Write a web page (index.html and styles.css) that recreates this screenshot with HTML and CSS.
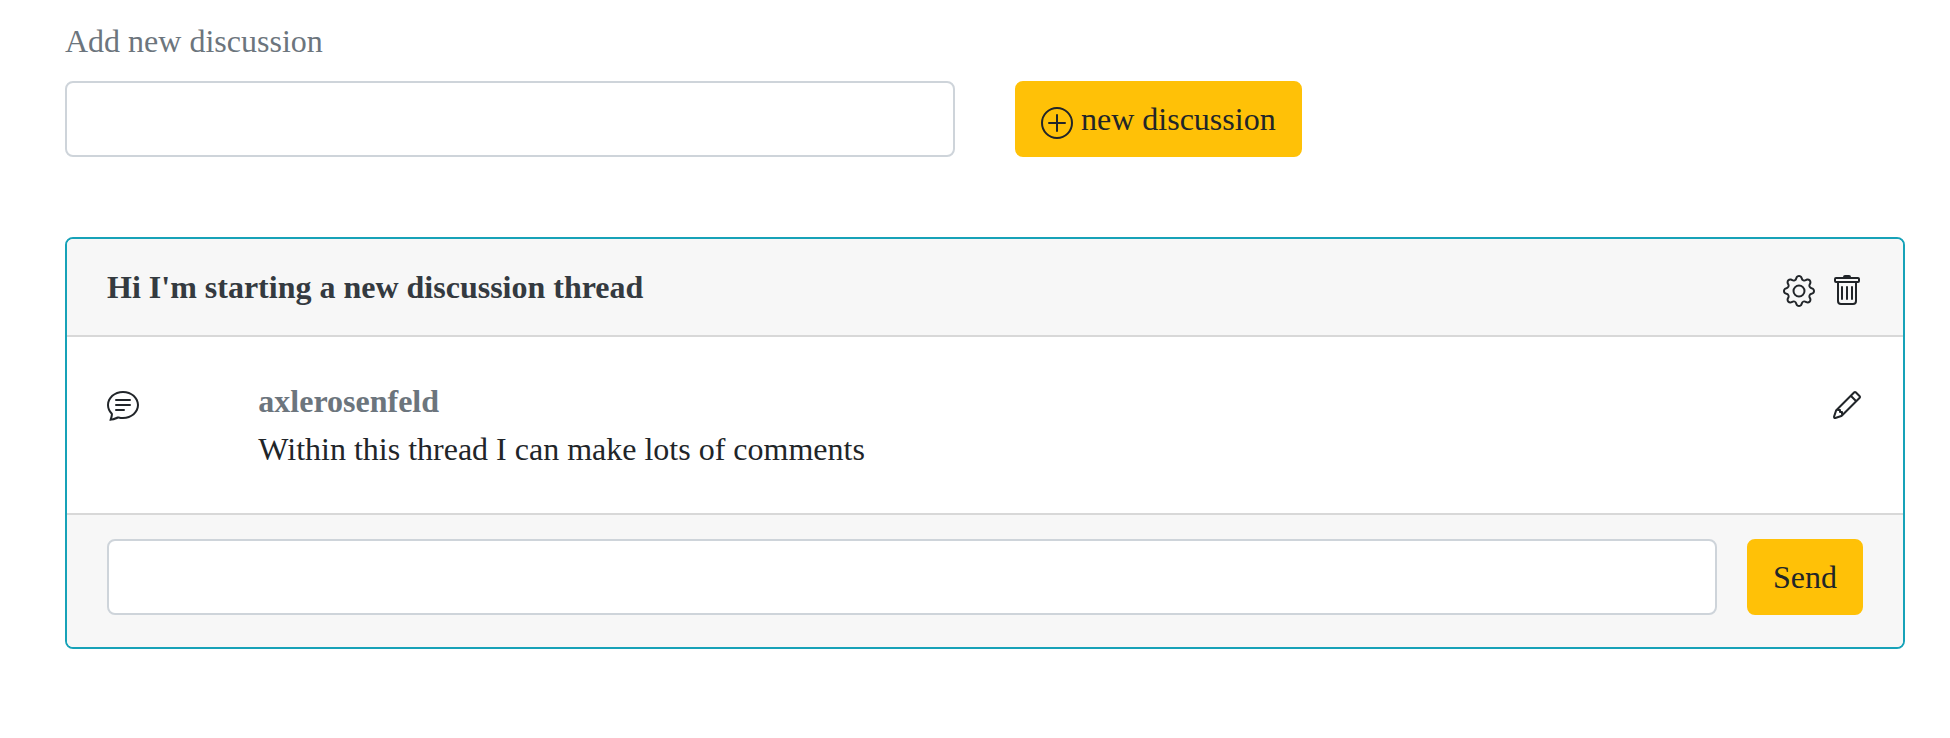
FILE: index.html
```html
<!DOCTYPE html>
<html lang="en">
<head>
<meta charset="utf-8">
<title>Discussions</title>
<link rel="stylesheet" href="styles.css">
</head>
<body>
<main class="page">
  <form class="new-discussion">
    <label class="label" for="topic">Add new discussion</label>
    <div class="new-row">
      <input class="input topic" id="topic" type="text">
      <button class="btn btn-new" type="button"><svg class="icon" viewBox="0 0 16 16" fill="currentColor"><path fill-rule="evenodd" d="M8 15A7 7 0 1 0 8 1a7 7 0 0 0 0 14zm0 1A8 8 0 1 0 8 0a8 8 0 0 0 0 16z"/><path fill-rule="evenodd" d="M8 3.5a.5.5 0 0 1 .5.5v3.500H12a.5.5 0 0 1 0 1H8.500V12a.5.5 0 0 1-1 0V8.500H4a.5.5 0 0 1 0-1h3.500V4a.5.5 0 0 1 .5-.5z"/></svg> new discussion</button>
    </div>
  </form>
  <section class="card">
    <header class="card-header">
      <strong class="title">Hi I'm starting a new discussion thread</strong>
      <div class="actions">
        <svg class="icon" viewBox="0 0 16 16" fill="currentColor"><path fill-rule="evenodd" d="M8.837 1.626c-.246-.835-1.428-.835-1.674 0l-.094.319A1.873 1.873 0 0 1 4.377 3.060l-.292-.16c-.764-.415-1.600.420-1.184 1.185l.159.292a1.873 1.873 0 0 1-1.115 2.692l-.319.094c-.835.246-.835 1.428 0 1.674l.319.094a1.873 1.873 0 0 1 1.115 2.693l-.16.291c-.415.764.420 1.600 1.185 1.184l.292-.159a1.873 1.873 0 0 1 2.692 1.116l.094.318c.246.835 1.428.835 1.674 0l.094-.319a1.873 1.873 0 0 1 2.693-1.115l.291.160c.764.415 1.600-.420 1.184-1.185l-.159-.291a1.873 1.873 0 0 1 1.116-2.693l.318-.094c.835-.246.835-1.428 0-1.674l-.319-.094a1.873 1.873 0 0 1-1.115-2.692l.160-.292c.415-.764-.420-1.600-1.185-1.184l-.291.159A1.873 1.873 0 0 1 8.930 1.945l-.094-.319zm-2.633-.283c.527-1.790 3.065-1.790 3.592 0l.094.319a.873.873 0 0 0 1.255.520l.292-.160c1.640-.892 3.434.901 2.540 2.541l-.159.292a.873.873 0 0 0 .520 1.255l.319.094c1.790.527 1.790 3.065 0 3.592l-.319.094a.873.873 0 0 0-.520 1.255l.160.292c.893 1.640-.902 3.434-2.541 2.540l-.292-.159a.873.873 0 0 0-1.255.520l-.094.319c-.527 1.790-3.065 1.790-3.592 0l-.094-.319a.873.873 0 0 0-1.255-.520l-.292.160c-1.640.893-3.433-.902-2.540-2.541l.159-.292a.873.873 0 0 0-.520-1.255l-.319-.094c-1.790-.527-1.790-3.065 0-3.592l.319-.094a.873.873 0 0 0 .520-1.255l-.160-.292c-.892-1.640.902-3.433 2.541-2.540l.292.159a.873.873 0 0 0 1.255-.520l.094-.319z"/><path fill-rule="evenodd" d="M8 5.754a2.246 2.246 0 1 0 0 4.492 2.246 2.246 0 0 0 0-4.492zM4.754 8a3.246 3.246 0 1 1 6.492 0 3.246 3.246 0 0 1-6.492 0z"/></svg>
        <svg class="icon" viewBox="0 0 16 16" fill="currentColor"><path fill-rule="evenodd" d="M6 1a1 1 0 0 1 1-1h2a1 1 0 0 1 1 1h3.500a1 1 0 0 1 1 1v1a1 1 0 0 1-1 1H13v9a2 2 0 0 1-2 2H5a2 2 0 0 1-2-2V4h-.5a1 1 0 0 1-1-1V2a1 1 0 0 1 1-1H6zM2.500 2v1h11V2h-11zM4.118 4 4 4.059V13a1 1 0 0 0 1 1h6a1 1 0 0 0 1-1V4.059L11.882 4H4.118z"/><path d="M5.500 5.500A.5.5 0 0 1 6 6v6a.5.5 0 0 1-1 0V6a.5.5 0 0 1 .5-.5zm2.500 0a.5.5 0 0 1 .5.5v6a.5.5 0 0 1-1 0V6a.5.5 0 0 1 .5-.5zm2.500 0a.5.5 0 0 1 .5.5v6a.5.5 0 0 1-1 0V6a.5.5 0 0 1 .5-.5z"/></svg>
      </div>
    </header>
    <div class="card-body">
      <div class="marker"><svg class="icon" viewBox="0 0 16 16" fill="currentColor"><path fill-rule="evenodd" d="M2.678 11.894a1 1 0 0 1 .287.801 10.970 10.970 0 0 1-.398 2c1.395-.323 2.247-.697 2.634-.893a1 1 0 0 1 .710-.074A8.060 8.060 0 0 0 8 14c3.996 0 7-2.807 7-6 0-3.192-3.004-6-7-6S1 4.808 1 8c0 1.468.617 2.830 1.678 3.894zm-.493 3.905a21.682 21.682 0 0 1-.713.129c-.200.032-.352-.176-.273-.362a9.680 9.680 0 0 0 .244-.637l.003-.010c.248-.720.450-1.548.524-2.319C.743 11.370 0 9.760 0 8c0-3.866 3.582-7 8-7s8 3.134 8 7-3.582 7-8 7a9.060 9.060 0 0 1-2.347-.306c-.520.263-1.639.742-3.468 1.105z"/><path fill-rule="evenodd" d="M4 5.500a.5.5 0 0 1 .5-.5h7a.5.5 0 0 1 0 1h-7a.5.5 0 0 1-.5-.5zM4 8a.5.5 0 0 1 .5-.5h7a.5.5 0 0 1 0 1h-7A.5.5 0 0 1 4 8zm0 2.500a.5.5 0 0 1 .5-.5h4a.5.5 0 0 1 0 1h-4a.5.5 0 0 1-.5-.5z"/></svg></div>
      <div class="comment">
        <strong class="author">axlerosenfeld</strong>
        <p class="text">Within this thread I can make lots of comments</p>
      </div>
      <svg class="icon" viewBox="0 0 16 16" fill="currentColor"><path fill-rule="evenodd" d="M11.293 1.293a1 1 0 0 1 1.414 0l2 2a1 1 0 0 1 0 1.414l-9 9a1 1 0 0 1-.390.242l-3 1a1 1 0 0 1-1.266-1.265l1-3a1 1 0 0 1 .242-.391l9-9zM12 2l2 2-9 9-3 1 1-3 9-9z"/><path fill-rule="evenodd" d="M12.146 6.354l-2.500-2.500.708-.708 2.500 2.500-.707.708zM3 10v.5a.5.5 0 0 0 .5.5H4v.5a.5.5 0 0 0 .5.5H5v.5a.5.5 0 0 0 .5.5H6v-1.500a.5.5 0 0 0-.5-.5H5v-.5a.5.5 0 0 0-.5-.5H3z"/></svg>
    </div>
    <footer class="card-footer">
      <input class="input message" type="text" aria-label="Comment">
      <button class="btn" type="button">Send</button>
    </footer>
  </section>
</main>
</body>
</html>
```

FILE: styles.css
```css
* {
  box-sizing: border-box;
}

body {
  margin: 0;
  background: #fff;
  color: #212529;
  font: 32px/48px "Liberation Serif", "Times New Roman", serif;
}

.page {
  padding: 17px 45px 0 65px;
}

.label {
  display: block;
  margin-bottom: 16px;
  color: #6c757d;
}

.new-row {
  display: flex;
  gap: 60px;
  margin-bottom: 80px;
}

.input {
  height: 76px;
  padding: 12px 24px;
  border: 2px solid #ced4da;
  border-radius: 8px;
  background: #fff;
  font: inherit;
}

.topic {
  width: 890px;
}

.btn {
  height: 76px;
  padding: 12px 24px;
  border: 2px solid #ffc107;
  border-radius: 8px;
  background: #ffc107;
  color: #212529;
  font: inherit;
  white-space: nowrap;
}

.icon {
  display: block;
  flex: none;
  width: 32px;
  height: 32px;
}

.btn-new .icon {
  display: inline-block;
  vertical-align: middle;
}

.card {
  border: 2px solid #17a2b8;
  border-radius: 8px;
  overflow: hidden;
}

.card-header {
  display: flex;
  justify-content: space-between;
  padding: 24px 40px;
  border-bottom: 2px solid #d8d8d8;
  background: #f7f7f7;
}

.title {
  color: #343a40;
}

.actions {
  display: flex;
  gap: 16px;
  padding-top: 12px;
}

.card-body {
  display: flex;
  padding: 40px;
}

.card-body .icon {
  margin-top: 12px;
}

.marker {
  width: 151.33px;
}

.comment {
  flex: 1;
}

.author {
  display: block;
  color: #6c757d;
}

.text {
  margin: 0;
}

.card-footer {
  display: flex;
  gap: 30px;
  padding: 24px 40px 32px;
  border-top: 2px solid #d8d8d8;
  background: #f7f7f7;
}

.message {
  flex: 1;
}
```
